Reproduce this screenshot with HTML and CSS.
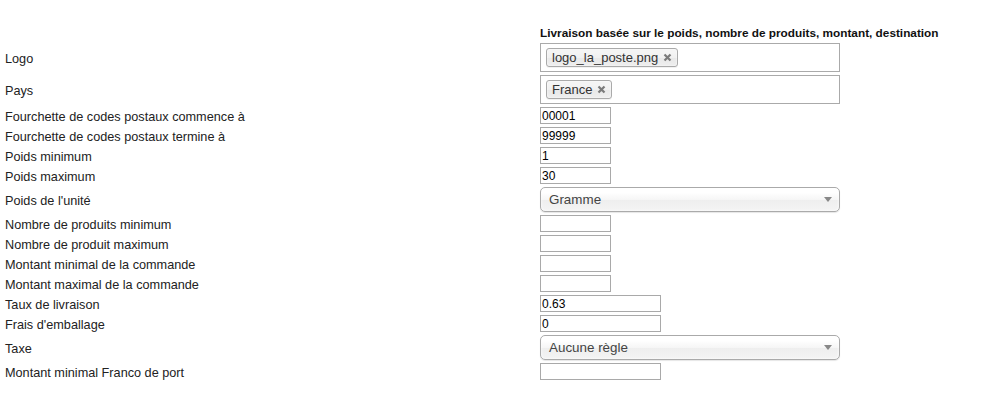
FILE: index.html
```html
<!DOCTYPE html>
<html lang="fr">
<head>
<meta charset="utf-8">
<link rel="stylesheet" href="styles.css">
</head>
<body>
<div class="form">
  <div class="label"></div>
  <div class="heading">Livraison basée sur le poids, nombre de produits, montant, destination</div>

  <div class="label">Logo</div>
  <div class="multi"><span class="tag">logo_la_poste.png<svg class="x" width="9" height="9" viewBox="0 0 9 9"><path d="M1.5 1.5L7.5 7.5M7.5 1.5L1.5 7.5" stroke="#7a7a7a" stroke-width="2.2"/></svg></span></div>

  <div class="label">Pays</div>
  <div class="multi"><span class="tag">France<svg class="x" width="9" height="9" viewBox="0 0 9 9"><path d="M1.5 1.5L7.5 7.5M7.5 1.5L1.5 7.5" stroke="#7a7a7a" stroke-width="2.2"/></svg></span></div>

  <div class="label">Fourchette de codes postaux commence à</div>
  <input class="field small" type="text" value="00001">

  <div class="label">Fourchette de codes postaux termine à</div>
  <input class="field small" type="text" value="99999">

  <div class="label">Poids minimum</div>
  <input class="field small" type="text" value="1">

  <div class="label">Poids maximum</div>
  <input class="field small" type="text" value="30">

  <div class="label">Poids de l'unité</div>
  <div class="select"><span>Gramme</span><svg class="arrow" width="8" height="5" viewBox="0 0 8 5"><path d="M0 0H8L4 5Z" fill="#888"/></svg></div>

  <div class="label">Nombre de produits minimum</div>
  <input class="field small" type="text" value="">

  <div class="label">Nombre de produit maximum</div>
  <input class="field small" type="text" value="">

  <div class="label">Montant minimal de la commande</div>
  <input class="field small" type="text" value="">

  <div class="label">Montant maximal de la commande</div>
  <input class="field small" type="text" value="">

  <div class="label">Taux de livraison</div>
  <input class="field medium" type="text" value="0.63">

  <div class="label">Frais d'emballage</div>
  <input class="field medium" type="text" value="0">

  <div class="label">Taxe</div>
  <div class="select"><span>Aucune règle</span><svg class="arrow" width="8" height="5" viewBox="0 0 8 5"><path d="M0 0H8L4 5Z" fill="#888"/></svg></div>

  <div class="label">Montant minimal Franco de port</div>
  <input class="field medium" type="text" value="">
</div>
</body>
</html>
```

FILE: styles.css
```css
html, body {
  margin: 0;
  padding: 0;
  background: #fff;
}
body {
  font-family: "Liberation Sans", Arial, sans-serif;
  font-size: 12px;
  color: #222;
}
.form {
  display: grid;
  grid-template-columns: 535px auto;
  row-gap: 3px;
  align-items: center;
  justify-items: start;
  padding: 26px 0 0 5px;
}
.label {
  font-size: 12.7px;
  line-height: 14px;
  padding-top: 2px;
  color: #222;
}
.heading {
  font-size: 11.8px;
  font-weight: bold;
  line-height: 14px;
  color: #111;
}
.multi {
  box-sizing: border-box;
  width: 300px;
  height: 29px;
  border: 1px solid #aaa;
  background: #fff;
  padding: 4px 5px;
  display: flex;
  align-items: center;
}
.tag {
  box-sizing: border-box;
  height: 19px;
  display: flex;
  align-items: center;
  gap: 5px;
  padding: 0 5px 0 5px;
  border: 1px solid #aaa;
  border-radius: 3px;
  background: linear-gradient(#f4f4f4 20%, #f0f0f0 50%, #e8e8e8 52%, #eee 100%);
  box-shadow: 0 0 2px #fff inset, 0 1px 0 rgba(0,0,0,0.05);
  color: #333;
  font-size: 13px;
  line-height: 13px;
}
.x {
  display: block;
}
.field {
  box-sizing: border-box;
  height: 17px;
  border: 1px solid #a9a9a9;
  padding: 0 1px;
  margin: 0;
  font-family: "Liberation Sans", Arial, sans-serif;
  font-size: 12px;
  color: #000;
  background: #fff;
  outline: none;
}
.small { width: 71px; }
.medium { width: 121px; }
.select {
  box-sizing: border-box;
  width: 300px;
  height: 25px;
  border: 1px solid #aaa;
  border-radius: 5px;
  background: linear-gradient(#fff 20%, #f6f6f6 50%, #eee 52%, #f4f4f4 100%);
  box-shadow: 0 0 3px #fff inset, 0 1px 1px rgba(0,0,0,0.1);
  display: flex;
  align-items: center;
  justify-content: space-between;
  padding: 0 7px 0 8px;
  color: #444;
  font-size: 13.4px;
}
.arrow {
  display: block;
}
```
